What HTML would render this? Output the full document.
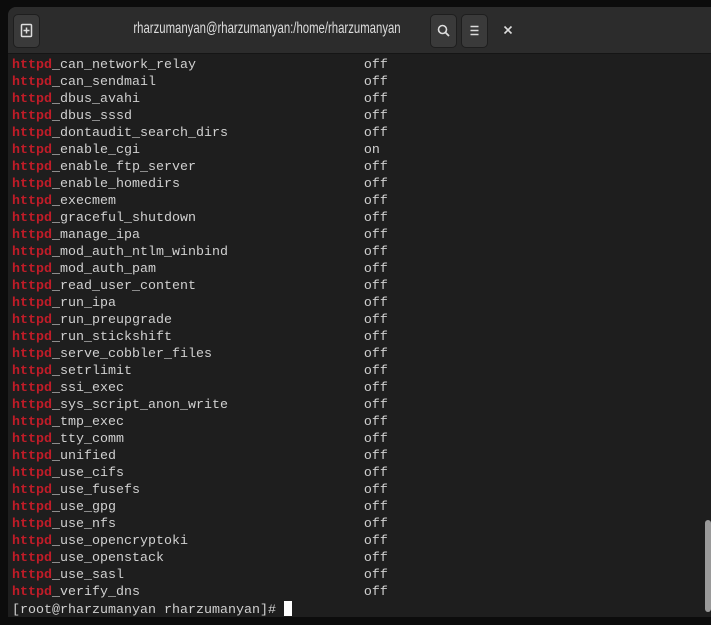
<!DOCTYPE html>
<html><head><style>
body{margin:0;width:711px;height:625px;background:#0c0c0c;overflow:hidden;position:relative;font-family:"Liberation Sans",sans-serif}
.win{position:absolute;left:8px;top:7px;width:710px;height:610px;background:#1e1e1e;border-radius:8px 0 0 0;overflow:hidden}
.hdr{height:46px;background:#2c2c2c;border-bottom:1px solid #151515;position:relative}
.btn{position:absolute;top:7px;width:25px;height:32px;background:#3a3a3a;border-radius:5px;border:1px solid #1e1e1e}
.title{position:absolute;left:259px;top:13px;color:#ddd;font-size:16px;white-space:nowrap;transform:translateX(-50%) scaleX(0.71);transform-origin:center}
pre{margin:0;position:absolute;left:4px;top:50px;font-family:"Liberation Mono",monospace;font-size:13.33px;line-height:17px;color:#d0d0d0}
b{color:#c01c28}
.sb{position:absolute;left:697px;top:513px;width:6px;height:92px;background:#9a9a9a;border-radius:3px}
.cur{display:inline-block;width:8px;height:15px;background:#fff;vertical-align:-3px}
</style></head><body>
<div class="win">
<div class="hdr">
<div class="btn" style="left:5px">
<svg width="25" height="32" viewBox="0 0 25 32"><rect x="7.5" y="9.5" width="10" height="12" rx="1" fill="none" stroke="#ddd" stroke-width="1.5"/><path d="M12.5 12.5v6M9.5 15.5h6" stroke="#ddd" stroke-width="1.5"/></svg></div>
<div class="title">rharzumanyan@rharzumanyan:/home/rharzumanyan</div>
<div class="btn" style="left:422px"><svg width="25" height="32" viewBox="0 0 25 32"><circle cx="11.5" cy="14.5" r="4" fill="none" stroke="#ddd" stroke-width="1.6"/><path d="M14.5 17.5l3.5 3.5" stroke="#ddd" stroke-width="1.8"/></svg></div>
<div class="btn" style="left:453px"><svg width="25" height="32" viewBox="0 0 25 32"><path d="M8.5 11.5h8M8.5 15.5h8M8.5 19.5h8" stroke="#ddd" stroke-width="1.5"/></svg></div>
<svg style="position:absolute;left:495px;top:18px" width="10" height="10" viewBox="0 0 10 10"><path d="M1.5 1.5l7 7M8.5 1.5l-7 7" stroke="#ddd" stroke-width="1.6"/></svg>
</div>
<pre><b>httpd</b>_can_network_relay                     off
<b>httpd</b>_can_sendmail                          off
<b>httpd</b>_dbus_avahi                            off
<b>httpd</b>_dbus_sssd                             off
<b>httpd</b>_dontaudit_search_dirs                 off
<b>httpd</b>_enable_cgi                            on
<b>httpd</b>_enable_ftp_server                     off
<b>httpd</b>_enable_homedirs                       off
<b>httpd</b>_execmem                               off
<b>httpd</b>_graceful_shutdown                     off
<b>httpd</b>_manage_ipa                            off
<b>httpd</b>_mod_auth_ntlm_winbind                 off
<b>httpd</b>_mod_auth_pam                          off
<b>httpd</b>_read_user_content                     off
<b>httpd</b>_run_ipa                               off
<b>httpd</b>_run_preupgrade                        off
<b>httpd</b>_run_stickshift                        off
<b>httpd</b>_serve_cobbler_files                   off
<b>httpd</b>_setrlimit                             off
<b>httpd</b>_ssi_exec                              off
<b>httpd</b>_sys_script_anon_write                 off
<b>httpd</b>_tmp_exec                              off
<b>httpd</b>_tty_comm                              off
<b>httpd</b>_unified                               off
<b>httpd</b>_use_cifs                              off
<b>httpd</b>_use_fusefs                            off
<b>httpd</b>_use_gpg                               off
<b>httpd</b>_use_nfs                               off
<b>httpd</b>_use_opencryptoki                      off
<b>httpd</b>_use_openstack                         off
<b>httpd</b>_use_sasl                              off
<b>httpd</b>_verify_dns                            off
[root@rharzumanyan rharzumanyan]# <span class="cur"></span></pre>
<div class="sb"></div>
</div>
</body></html>
